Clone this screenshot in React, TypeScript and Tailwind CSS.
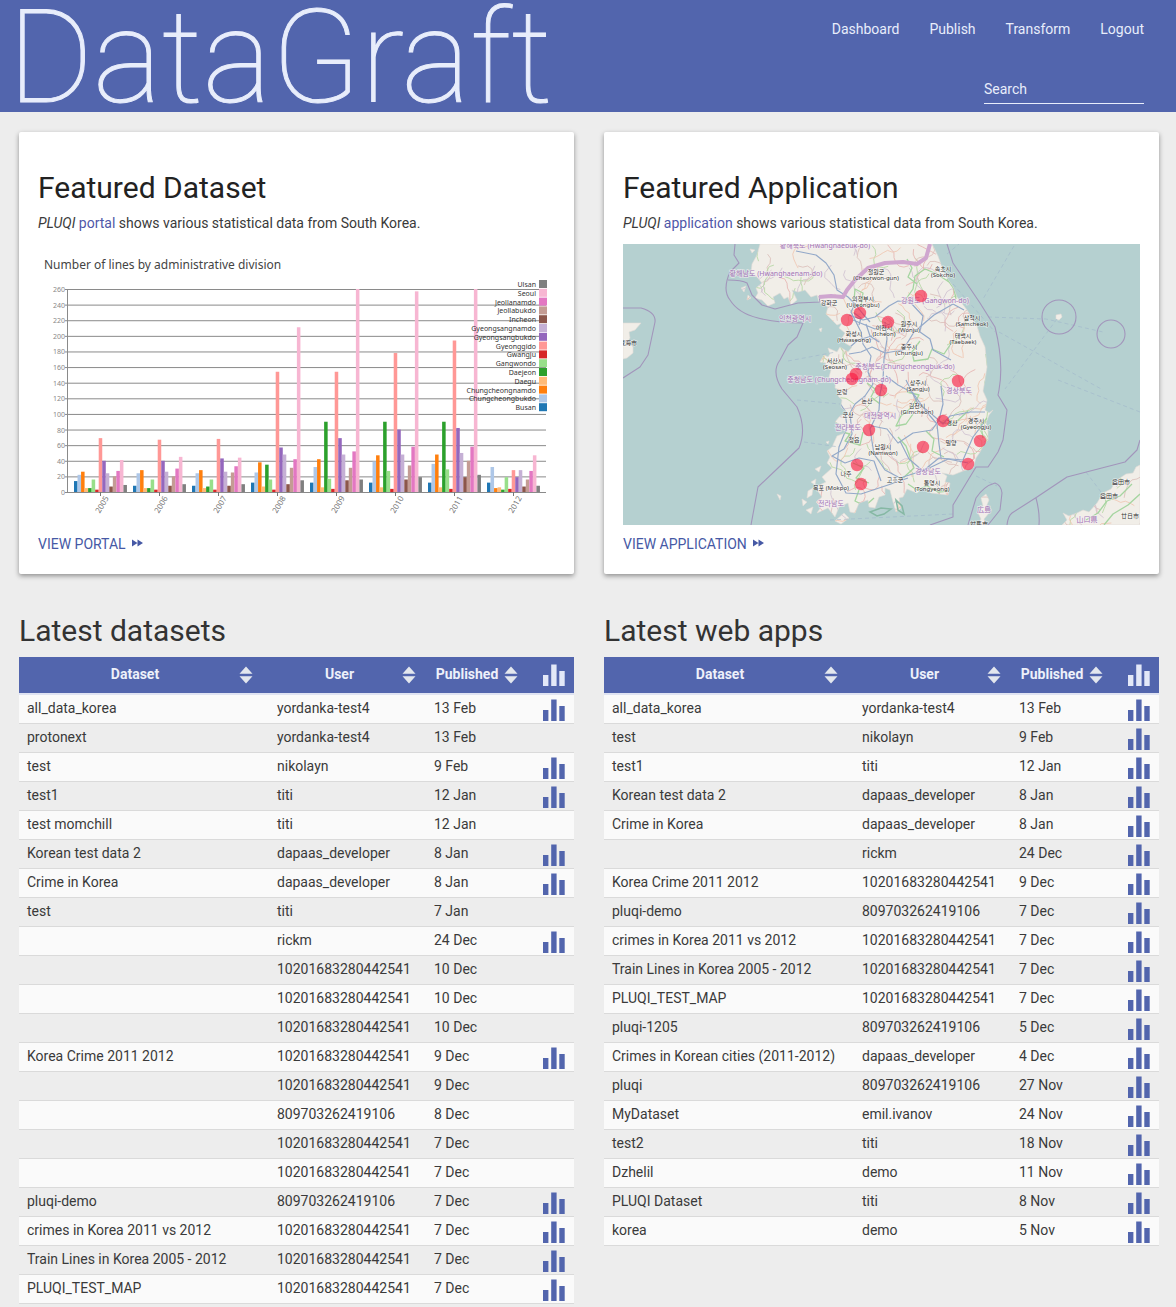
import React from "react";

type Row = { name: string; user: string; date: string; chart: boolean };

const parse = (source: string): Row[] =>
  source
    .trim()
    .split("\n")
    .map((line) => {
      const [name, user, date, chart] = line.split("|").map((s) => s.trim());
      return { name, user, date, chart: chart === "y" };
    });

const datasets = parse(`
all_data_korea|yordanka-test4|13 Feb|y
protonext|yordanka-test4|13 Feb|
test|nikolayn|9 Feb|y
test1|titi|12 Jan|y
test momchill|titi|12 Jan|
Korean test data 2|dapaas_developer|8 Jan|y
Crime in Korea|dapaas_developer|8 Jan|y
test|titi|7 Jan|
|rickm|24 Dec|y
|10201683280442541|10 Dec|
|10201683280442541|10 Dec|
|10201683280442541|10 Dec|
Korea Crime 2011 2012|10201683280442541|9 Dec|y
|10201683280442541|9 Dec|
|809703262419106|8 Dec|
|10201683280442541|7 Dec|
|10201683280442541|7 Dec|
pluqi-demo|809703262419106|7 Dec|y
crimes in Korea 2011 vs 2012|10201683280442541|7 Dec|y
Train Lines in Korea 2005 - 2012|10201683280442541|7 Dec|y
PLUQI_TEST_MAP|10201683280442541|7 Dec|y
`);

const webApps = parse(`
all_data_korea|yordanka-test4|13 Feb|y
test|nikolayn|9 Feb|y
test1|titi|12 Jan|y
Korean test data 2|dapaas_developer|8 Jan|y
Crime in Korea|dapaas_developer|8 Jan|y
|rickm|24 Dec|y
Korea Crime 2011 2012|10201683280442541|9 Dec|y
pluqi-demo|809703262419106|7 Dec|y
crimes in Korea 2011 vs 2012|10201683280442541|7 Dec|y
Train Lines in Korea 2005 - 2012|10201683280442541|7 Dec|y
PLUQI_TEST_MAP|10201683280442541|7 Dec|y
pluqi-1205|809703262419106|5 Dec|y
Crimes in Korean cities (2011-2012)|dapaas_developer|4 Dec|y
pluqi|809703262419106|27 Nov|y
MyDataset|emil.ivanov|24 Nov|y
test2|titi|18 Nov|y
Dzhelil|demo|11 Nov|y
PLUQI Dataset|titi|8 Nov|y
korea|demo|5 Nov|y
`);

/* ---------- bar chart ---------- */

const series: [string, string][] = [
  ["Busan", "#1f77b4"],
  ["Chungcheongbukdo", "#aec7e8"],
  ["Chungcheongnamdo", "#ff7f0e"],
  ["Daegu", "#ffbb78"],
  ["Daejeon", "#2ca02c"],
  ["Gangwondo", "#98df8a"],
  ["Gwangju", "#d62728"],
  ["Gyeonggido", "#ff9896"],
  ["Gyeongsangbukdo", "#9467bd"],
  ["Gyeongsangnamdo", "#c5b0d5"],
  ["Incheon", "#8c564b"],
  ["Jeollabukdo", "#c49c94"],
  ["Jeollanamdo", "#e377c2"],
  ["Seoul", "#f7b6d2"],
  ["Ulsan", "#7f7f7f"],
];

const years: [number, number[]][] = [
  [2005, [14, 22, 26, 5, 5, 16, 3, 69, 40, 24, 7, 20, 27, 41, 9]],
  [2006, [8, 24, 28, 5, 5, 16, 3, 67, 40, 26, 8, 20, 30, 45, 10]],
  [2007, [8, 24, 28, 5, 7, 16, 3, 68, 43, 26, 8, 25, 33, 44, 10]],
  [2008, [12, 25, 38, 7, 35, 16, 3, 154, 57, 48, 10, 31, 42, 211, 15]],
  [2009, [12, 32, 42, 6, 90, 17, 4, 154, 69, 48, 15, 31, 52, 260, 16]],
  [2010, [12, 39, 47, 6, 90, 27, 4, 178, 80, 48, 16, 34, 58, 257, 19]],
  [2011, [12, 36, 48, 6, 90, 29, 4, 194, 82, 50, 19, 40, 58, 260, 22]],
  [2012, [12, 32, 5, 6, 3, 19, 4, 28, 19, 28, 7, 16, 27, 47, 8]],
];

const BASE = 248;
const UNIT = 203 / 260;
const BAR = 3.53;

function LinesChart() {
  const ticks = Array.from({ length: 14 }, (_, i) => i * 20);
  return (
    <svg viewBox="0 0 517 281" className="block h-auto w-full font-['Noto_Sans',sans-serif]" role="img" aria-label="Number of lines by administrative division">
      <text x="6" y="25" fontSize="12" fill="#444">
        Number of lines by administrative division
      </text>
      {ticks.map((t) => (
        <g key={t}>
          <line x1="27" x2="508" y1={BASE + 0.5 - t * UNIT} y2={BASE + 0.5 - t * UNIT} stroke="#8a8a8a" />
          <text x="27" y={BASE + 3 - t * UNIT} textAnchor="end" fontSize="7" fill="#888">
            {t}
          </text>
        </g>
      ))}
      <line x1="29.5" x2="29.5" y1="45" y2="249" stroke="#8a8a8a" />
      {years.map(([year, values], g) => {
        const left = 36 + g * 59;
        return (
          <g key={year}>
            {values.map((v, i) => (
              <rect key={i} x={left + i * BAR} y={BASE - v * UNIT} width={BAR} height={v * UNIT} fill={series[i][1]} />
            ))}
            <line x1={left + 26.5} x2={left + 26.5} y1="248" y2="252" stroke="#777" />
            <text transform={`translate(${left + 35} 254) rotate(-60)`} textAnchor="end" fontSize="8" fill="#777">
              {year}
            </text>
          </g>
        );
      })}
      {[...series].reverse().map(([name, color], i) => (
        <g key={name}>
          <text x="498" y={43 + i * 8.8} textAnchor="end" fontSize="7" fill="#333">
            {name}
          </text>
          <rect x="501" y={36 + i * 8.8} width="8" height="8" fill={color} />
        </g>
      ))}
    </svg>
  );
}

/* ---------- map ---------- */

const MAINLAND =
  "M137 0 134 11 129 20 128 29 134 33 139 39 133 44 135 49 132 54 139 56 145 62 152 59 150 53 157 49 161 55 165 53 168 61 174 56 169 46 175 48 182 46 188 53 194 51 196 58 205 63 203 70 209 76 214 81 219 79 216 84 222 89 219 94 222 99 229 103 225 108 217 103 214 108 205 104 207 110 205 113 201 111 197 118 203 119 202 124 208 126 206 133 209 136 213 134 212 144 216 146 215 152 219 156 218 163 225 169 217 172 212 178 219 181 222 189 214 192 209 203 204 207 207 213 204 219 209 224 199 233 203 238 192 243 199 253 193 258 198 263 194 269 205 264 212 273 216 263 225 259 227 268 232 269 236 259 245 256 246 263 252 264 256 253 262 251 262 244 267 246 270 258 273 268 278 264 276 254 280 253 284 245 294 249 301 243 308 249 325 251 327 239 322 238 324 232 319 229 330 231 340 227 350 224 353 214 357 208 361 200 365 196 365 187 363 179 366 171 370 166 366 169 362 166 364 156 360 147 362 136 364 123 363 113 362 103 357 92 354 82 350 76 344 66 334 53 330 43 324 34 320 26 315 12 309 0Z";
const ISLANDS = [
  "M0 79 18 79 12 86 6 88 7 94 5 97 10 103 10 109 4 114 0 115Z",
  "M439 281 444 276 440 269 446 272 454 269 460 266 466 268 474 259 480 249 488 245 494 236 503 230 510 229 513 223 517 221 517 281Z",
  "M355 281 358 275 355 269 360 262 358 254 363 250 366 256 363 263 366 269 361 275 362 281Z",
  "M118 44 123 42 121 48Z M125 51 128 54 124 56Z M127 5 132 6 129 9Z",
  "M185 247 190 244 189 251 184 254Z M179 255 184 258 180 262Z M183 266 190 263 188 270Z M192 225 198 222 196 228Z M154 250 158 252 157 256Z M196 85 199 84 198 88Z M433 71 438 70 439 73 436 76 433 75Z M203 198 206 197 205 200Z M188 238 193 235 192 241Z M212 277 221 269 226 274 218 280Z",
];

const BORDERS = [
  "M112 0 111 11 116 19 107 28Q99 46 107 56 115 69 135 74T180 79L174 93 165 101 157 116Q148 128 159 145L174 163Q184 185 176 204L155 224 135 243 128 281",
  "M105 36 Q119 36 124 39 L129 51 139 61 152 65 175 59 197 58 196 52",
  "M324 0 330 19 357 59 372 83Q381 119 376 146L375 151 384 166 380 196 375 208 365 223 353 223 330 261 330 273 307 281",
  "M345 281 353 254 Q361 242 372 239 Q378 241 379 249 L377 266 365 281",
  "M384 281Q385 272 389 269L414 253 444 233 502 218 514 206 517 196M413 254Q417 269 416 281",
  "M0 64 18 64Q33 68 32 78L25 111 17 123 0 134",
];

const HIGHWAYS = [
  "M173 7 193 11 203 19 211 31 214 46 225 53 232 60 240 70 247 78",
  "M226 71 240 76 252 73 266 62 275 57 287 58 300 72 297 88 307 95 310 106 328 116",
  "M232 60 228 68 238 88 240 100 248 112 245 128 250 140 242 152 232 160 227 169 229 190 221 205 209 212 222 219 236 214 251 217 258 237",
  "M262 78 264 95 261 115 260 136 257 150 256 166 247 185 251 210 262 226 277 234 302 226 325 215 345 219",
  "M263 132 275 141 290 149 302 166 314 180 316 200 318 214",
  "M283 136 294 158 312 173 320 180 327 172 347 168 362 168",
  "M318 142 320 160 316 176 309 186 290 189 275 199 264 185 249 182",
  "M226 110 238 108 249 103 262 109 280 106 291 88 311 71 330 60 341 66",
  "M277 197 286 215 300 227 316 214 340 216 350 193 360 180",
  "M213 153 222 167 224 183 216 203 213 230 223 249 238 250 250 246 268 240 285 234",
  "M249 92 235 96 227 103M236 81 238 74 231 69M243 80 247 92 256 98M230 76 252 85 267 80",
];

const GREENS = [
  "M283 55 290 45 292 32 302 25 314 30 326 38M284 15 289 24 285 33 294 40",
  "M297 97 289 108 291 117 305 115 309 105 321 110 329 98",
  "M284 148 296 151 289 163 278 172 273 182 283 180 290 170",
  "M363 110 365 125 362 139 364 153M364 174 358 181 360 194",
  "M275 193 283 202 288 216 291 224 280 234M318 178 330 181 345 167",
  "M231 57 232 45 240 49 238 62M244 139 252 145 248 153 257 160",
  "M215 187 227 190 222 197 237 201 240 188M230 219 241 224 233 234 246 239",
  "M285 240 294 246 304 242 315 248 326 247M236 246 232 257 242 262 251 254",
  "M463 276 475 269 484 257 497 252 509 240M481 281 490 270 505 261 517 250",
  "M324 35 331 45 333 55M303 187 311 195 309 207 321 213",
];

// Winding minor roads, laid out from a fixed seed so that they never change.
function minorRoads() {
  let seed = 7;
  const rnd = () => {
    seed = (seed * 16807) % 2147483647;
    return seed / 2147483647;
  };
  const paths: string[] = [];
  for (let i = 0; i < 420; i++) {
    let x = 125 + rnd() * 392;
    let y = rnd() * 281;
    let a = rnd() * 6.28;
    let d = `M${x.toFixed(1)} ${y.toFixed(1)}`;
    for (let k = 0; k < 7; k++) {
      a += (rnd() - 0.5) * 1.9;
      x += Math.cos(a) * 5;
      y += Math.sin(a) * 5;
      d += `L${x.toFixed(1)} ${y.toFixed(1)}`;
    }
    paths.push(d);
  }
  return paths;
}
const ROADS = minorRoads();
const ROAD_COLORS = ["#e6b8b4", "#dcc2bc", "#efc8b4", "#b8d8a6", "#d3c5d2"];

const CITIES: [number, number, string, string][] = [
  [253, 30, "철원군", "(Cheorwon-gun)"],
  [320, 27, "속초시", "(Sokcho)"],
  [240, 57, "의정부시", "(Uijeongbu)"],
  [206, 61, "강화군", ""],
  [231, 92, "화성시", "(Hwaseong)"],
  [261, 86, "이천시", "(Icheon)"],
  [286, 82, "원주시", "(Wonju)"],
  [349, 76, "삼척시", "(Samcheok)"],
  [340, 94, "태백시", "(Taebaek)"],
  [286, 105, "충주시", "(Chungju)"],
  [212, 119, "서산시", "(Seosan)"],
  [295, 141, "상주시", "(Sangju)"],
  [294, 164, "김천시", "(Gimcheon)"],
  [219, 150, "보령", ""],
  [225, 173, "군산", ""],
  [244, 159, "논산", ""],
  [231, 198, "정읍", ""],
  [260, 205, "남원시", "(Namwon)"],
  [353, 179, "경주시", "(Gyeongju)"],
  [328, 201, "밀양", ""],
  [329, 181, "경산", ""],
  [223, 232, "나주", ""],
  [208, 246, "목포 (Mokpo)", ""],
  [272, 238, "고흥군", ""],
  [309, 241, "통영시", "(Tongyeong)"],
  [5, 101, "威海市", ""],
  [498, 240, "益田市", ""],
  [486, 254, "益田市", ""],
  [507, 274, "廿日市", ""],
  [356, 282, "対馬市", ""],
];

const PROVINCES: [number, number, string][] = [
  [202, 4, "황해북도 (Hwanghaebuk-do)"],
  [153, 32, "황해남도 (Hwanghaenam-do)"],
  [172, 77, "인천광역시"],
  [312, 59, "강원도 (Gangwon-do)"],
  [282, 125, "충청북도(Chungcheongbuk-do)"],
  [216, 138, "충청남도 (Chungcheongnam-do)"],
  [336, 149, "경상북도"],
  [225, 186, "전라북도"],
  [257, 174, "대전광역시"],
  [305, 230, "경상남도"],
  [208, 262, "전라남도"],
  [361, 268, "広島"],
  [464, 278, "山口県"],
];

const MARKERS = [
  [298, 52], [237, 69], [224, 76], [265, 78], [233, 130], [229, 135], [258, 146], [335, 137],
  [320, 177], [246, 186], [300, 203], [357, 197], [345, 220], [234, 221], [238, 240],
];

function KoreaMap() {
  return (
    <svg viewBox="0 0 517 281" className="block h-auto w-full font-['Noto_Sans','Noto_Sans_CJK_KR',sans-serif]" role="img" aria-label="Map of South Korea">
      <defs>
        <clipPath id="land">
          <path d={MAINLAND} />
          {ISLANDS.map((d) => (
            <path key={d} d={d} />
          ))}
        </clipPath>
      </defs>
      <rect width="517" height="281" fill="#b5d0d0" />
      <g fill="#f1eee8" stroke="#e2dcd6" strokeWidth="0.6">
        <path d={MAINLAND} />
        {ISLANDS.map((d) => (
          <path key={d} d={d} />
        ))}
      </g>
      <g clipPath="url(#land)" fill="none">
        {ROADS.map((d, i) => (
          <path key={i} d={d} stroke={ROAD_COLORS[i % 5]} strokeWidth="0.9" />
        ))}
        {GREENS.map((d) => (
          <path key={d} d={d} stroke="#a5d5a0" strokeWidth="1.3" strokeLinejoin="round" />
        ))}
        {HIGHWAYS.map((d) => (
          <path key={d} d={d} stroke="#93a9c9" strokeWidth="1.2" strokeLinejoin="round" />
        ))}
      </g>
      <path d="M247 268 258 264 268 265 261 270 254 272ZM273 256 279 262 281 270 275 266Z" fill="none" stroke="#86b8a4" strokeWidth="1.5" />
      <g fill="none" stroke="#9fb6cb" strokeWidth="0.6" strokeDasharray="4 3">
        <path d="M391 2 360 55M365 73 423 75 480 88M376 88 480 146M434 75 382 145M435 136 517 168M330 40 372 88M324 10 336 0M174 156 217 160M181 198 216 203M165 117 213 108M353 232 374 242M463 228 478 248M207 276 330 270" />
      </g>
      <g fill="none" stroke="#a295bb" strokeWidth="1.1" strokeLinejoin="round">
        {BORDERS.map((d) => (
          <path key={d} d={d} />
        ))}
        <circle cx="436" cy="73" r="17" />
        <circle cx="488" cy="90" r="14" />
      </g>
      <path d="M196 53 208 52 220 53 224 46 232 36 245 24 262 19 280 18 294 20 303 14 307 0" fill="none" stroke="#cfa6cf" strokeWidth="4" strokeLinejoin="round" />
      <g textAnchor="middle" fontSize="7" fill="#a274b4" stroke="#f6f0f4" strokeWidth="1.5" paintOrder="stroke" strokeOpacity="0.7">
        {PROVINCES.map(([x, y, t], i) => (
          <text key={i} x={x} y={y}>
            {t}
          </text>
        ))}
      </g>
      <g textAnchor="middle" fontSize="6" fill="#333" stroke="#fff" strokeWidth="1.2" strokeOpacity="0.6" paintOrder="stroke">
        {CITIES.map(([x, y, ko, en], i) => (
          <g key={i}>
            <text x={x} y={y}>
              {ko}
            </text>
            <text x={x} y={y + 6}>
              {en}
            </text>
          </g>
        ))}
      </g>
      <g fill="#f8183f" fillOpacity="0.62">
        {MARKERS.map(([x, y]) => (
          <circle key={`${x}-${y}`} cx={x} cy={y} r="6.2" />
        ))}
      </g>
    </svg>
  );
}

/* ---------- small icons ---------- */

function BarsIcon({ className }: { className: string }) {
  return (
    <svg viewBox="0 0 22 22" className={`inline-block size-[22px] ${className}`} fill="currentColor" aria-hidden="true">
      <path d="M0 11h5.4v11H0zM8.2.5h5.4V22H8.2zM16.3 7h5.4v15h-5.4z" />
    </svg>
  );
}

function SortButton({ label }: { label: string }) {
  return (
    <button type="button" aria-label={`Sort by ${label}`} className="shrink-0 cursor-pointer">
      <svg viewBox="0 0 14 18" className="block h-[18px] w-3.5 fill-[#e3e7ee]" aria-hidden="true">
        <path d="M7 .5 13.5 7.7H.5zM7 17.5.5 10.2h13z" />
      </svg>
    </button>
  );
}

function ForwardIcon() {
  return (
    <svg viewBox="0 0 11 8" className="mb-0.5 h-2 w-[11px] fill-current" aria-hidden="true">
      <path d="M0 .5 5.5 4 0 7.5zM5.5.5 11 4 5.5 7.5z" />
    </svg>
  );
}

/* ---------- page parts ---------- */

function FeaturedCard(props: { title: string; linkText: string; action: string; children: React.ReactNode }) {
  return (
    <article className="rounded-xs bg-white px-[19px] pt-9 pb-[18px] shadow-[0_2px_5px_rgba(0,0,0,0.4)]">
      <h2 className="text-[30px] leading-10 text-[#222]">{props.title}</h2>
      <p className="mt-[3px] text-sm leading-6">
        <em>PLUQI</em>{" "}
        <a href="#" className="text-[#4f57a8]">
          {props.linkText}
        </a>{" "}
        shows various statistical data from South Korea.
      </p>
      <div className="mt-[9px]">{props.children}</div>
      <a href="#" className="mt-[7px] flex w-fit items-center gap-1.5 text-sm leading-6 text-[#4659a5]">
        {props.action}
        <ForwardIcon />
      </a>
    </article>
  );
}

function HeaderLabel({ text }: { text: string }) {
  return (
    <div className="flex items-center">
      <span className="flex-1 pb-0.5 text-center">{text}</span>
      <SortButton label={text.toLowerCase()} />
    </div>
  );
}

function ListTable({ title, rows }: { title: string; rows: Row[] }) {
  return (
    <section>
      <h2 className="text-[30px] leading-10 text-[#333]">{title}</h2>
      <table className="mt-1.5 w-full table-fixed border-collapse text-left text-sm leading-5">
        <thead>
          <tr className="h-[37px] border-b-2 border-[#dfe3f2] bg-[#5265ad] text-[#edf0fa]">
            <th className="py-0 pr-4 pl-3 font-bold">
              <HeaderLabel text="Dataset" />
            </th>
            <th className="w-[157px] py-0 pr-2.5 pl-2 font-bold">
              <HeaderLabel text="User" />
            </th>
            <th className="w-[100px] py-0 pr-2 pl-1 font-bold">
              <HeaderLabel text="Published" />
            </th>
            <th className="w-12 py-0 pr-[9px] text-right" aria-label="Chart">
              <BarsIcon className="align-middle text-[#e3e8f8]" />
            </th>
          </tr>
        </thead>
        <tbody>
          {rows.map((row, i) => (
            <tr key={i} className="h-[29px] border-b border-[#dadada] odd:bg-[#fafafa]">
              <td className="truncate pt-0 pb-0.5 pl-2">{row.name}</td>
              <td className="pt-0 pb-0.5 pl-2">{row.user}</td>
              <td className="pt-0 pb-0.5 pl-2">{row.date}</td>
              <td className="py-0 pr-[9px]">
                {row.chart && (
                  <a href="#" aria-label={`Open chart ${row.name}`} className="flex justify-end pt-0.5">
                    <BarsIcon className="text-[#5265ad]" />
                  </a>
                )}
              </td>
            </tr>
          ))}
        </tbody>
      </table>
    </section>
  );
}

export default function App() {
  return (
    <div className="bg-[#ededed] pb-1 font-[Roboto,sans-serif] text-sm text-[#3a3a3a]">
      <header className="flex h-28 items-start justify-between bg-[#5265ad] pr-8 pl-2 text-[#e8edfb]">
        <h1 className="text-[130px] leading-[115px] font-thin [-webkit-text-stroke:1px_#e8edfb]">DataGraft</h1>
        <div className="flex flex-col items-end pt-[19px]">
          <nav className="flex gap-[30px] leading-5">
            <a href="#">Dashboard</a>
            <a href="#">Publish</a>
            <a href="#">Transform</a>
            <a href="#">Logout</a>
          </nav>
          <input
            type="search"
            aria-label="Search"
            placeholder="Search"
            className="mt-9 h-[29px] w-40 border-b border-[#e8edfb] bg-transparent text-sm outline-none placeholder:text-[#e8edfb]"
          />
        </div>
      </header>
      <main className="grid grid-cols-2 gap-x-[30px] gap-y-[37px] pt-5 pr-[17px] pl-[19px]">
        <FeaturedCard title="Featured Dataset" linkText="portal" action="VIEW PORTAL">
          <LinesChart />
        </FeaturedCard>
        <FeaturedCard title="Featured Application" linkText="application" action="VIEW APPLICATION">
          <KoreaMap />
        </FeaturedCard>
        <ListTable title="Latest datasets" rows={datasets} />
        <ListTable title="Latest web apps" rows={webApps} />
      </main>
    </div>
  );
}
